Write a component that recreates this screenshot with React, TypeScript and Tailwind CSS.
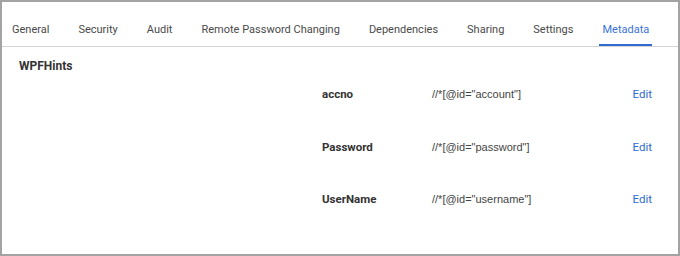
import React, { useState } from "react";

const tabs = [
  "General",
  "Security",
  "Audit",
  "Remote Password Changing",
  "Dependencies",
  "Sharing",
  "Settings",
  "Metadata",
];

const hints = [
  { name: "accno", value: '//*[@id="account"]' },
  { name: "Password", value: '//*[@id="password"]' },
  { name: "UserName", value: '//*[@id="username"]' },
];

const App = () => {
  const [active, setActive] = useState<string>("Metadata");

  return (
    <div className="w-[680px] h-[256px] bg-white border-2 border-[#a3a3a3] font-['Roboto',sans-serif] overflow-hidden">
      <div className="flex gap-[23px] pl-[7px] pt-[14px] border-b border-[#d4d4d4]">
        {tabs.map((t) => (
          <button
            key={t}
            onClick={() => setActive(t)}
            className={
              active === t
                ? "shrink-0 whitespace-nowrap px-[3px] h-[30px] text-[11px] text-[#3b73d9] border-b-2 border-[#2f6bd0]"
                : "shrink-0 whitespace-nowrap px-[3px] h-[30px] text-[11px] text-[#4a4a4a] border-b-2 border-transparent"
            }
          >
            {t}
          </button>
        ))}
      </div>
      <div className="pl-[17px] pt-[11px] pr-[26px]">
        <div className="text-[12px] font-bold text-[#333] leading-[16px]">WPFHints</div>
        <div className="flex flex-col gap-[36.5px] pt-[12px]">
          {hints.map((h) => (
            <div key={h.name} className="flex items-center pl-[303px] leading-[16px]">
              <div className="w-[110px] text-[11.5px] font-bold text-[#333]">{h.name}</div>
              <div className="flex-1 text-[11px] text-[#444] font-['Liberation_Sans',sans-serif]">{h.value}</div>
              <button className="text-[11.5px] text-[#2f6bd0]">Edit</button>
            </div>
          ))}
        </div>
      </div>
    </div>
  );
};

export default App;
